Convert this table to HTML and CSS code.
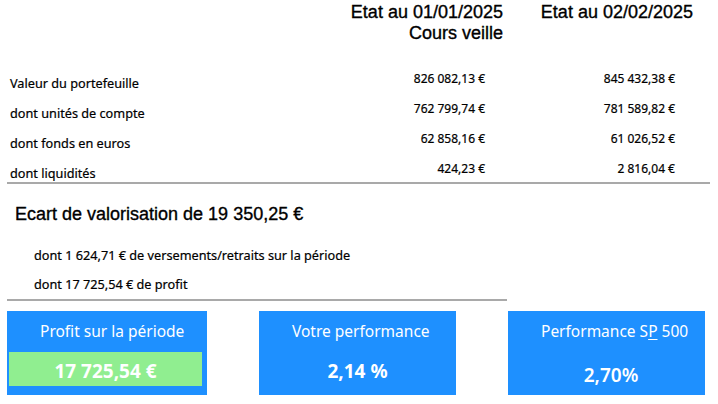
FILE: index.html
```html
<!DOCTYPE html>
<html lang="fr">
<head>
<meta charset="utf-8">
<title>Etat du portefeuille</title>
<link rel="stylesheet" href="styles.css">
</head>
<body>
<div class="page">
  <div class="head">
    <div></div>
    <div class="hcell">Etat au 01/01/2025<br>Cours veille</div>
    <div class="hcell">Etat au 02/02/2025</div>
  </div>

  <div class="rows">
    <div class="label">Valeur du portefeuille</div>
    <div class="val">826 082,13 €</div>
    <div class="val">845 432,38 €</div>
    <div></div>

    <div class="label">dont unités de compte</div>
    <div class="val">762 799,74 €</div>
    <div class="val">781 589,82 €</div>
    <div></div>

    <div class="label">dont fonds en euros</div>
    <div class="val">62 858,16 €</div>
    <div class="val">61 026,52 €</div>
    <div></div>

    <div class="label">dont liquidités</div>
    <div class="val">424,23 €</div>
    <div class="val">2 816,04 €</div>
    <div></div>
  </div>

  <div class="ecart">Ecart de valorisation de 19 350,25 €</div>

  <div class="subs">
    <div class="sub">dont 1 624,71 € de versements/retraits sur la période</div>
    <div class="sub">dont 17 725,54 € de profit</div>
  </div>

  <div class="cards">
    <div class="card">
      <div class="ctitle">Profit sur la période</div>
      <div class="cval cval-green">17 725,54 €</div>
    </div>
    <div class="card">
      <div class="ctitle">Votre performance</div>
      <div class="cval">2,14 %</div>
    </div>
    <div class="card">
      <div class="ctitle">Performance S<u>P</u> 500</div>
      <div class="cval cval-sp">2,70%</div>
    </div>
  </div>
</div>
</body>
</html>
```

FILE: styles.css
```css
html, body {
  margin: 0;
  padding: 0;
  background: #ffffff;
}

body {
  font-family: "Noto Sans", "DejaVu Sans", sans-serif;
  color: #000000;
}

.page {
  width: 718px;
  height: 404px;
  overflow: hidden;
}

.head {
  display: grid;
  grid-template-columns: 313px 190px 190px;
  padding-top: 2px;
}

.hcell {
  font-family: "Liberation Sans", Arial, sans-serif;
  font-size: 18px;
  line-height: 21px;
  text-align: right;
  -webkit-text-stroke: 0.35px #000;
}

.rows {
  margin: 18px 0 0 7px;
  width: 703px;
  display: grid;
  grid-template-columns: 306px 172px 190px 1fr;
  grid-auto-rows: 30px;
  align-items: end;
  border-bottom: 2px solid #a9a9a9;
}

.label {
  padding-left: 3px;
  font-size: 12.7px;
  line-height: 16px;
  margin-bottom: 1px;
  -webkit-text-stroke: 0.2px #000;
}

.val {
  text-align: right;
  font-size: 12px;
  line-height: 16px;
  padding-bottom: 5px;
  -webkit-text-stroke: 0.2px #000;
}

.ecart {
  margin: 20px 0 0 15px;
  font-family: "Liberation Sans", Arial, sans-serif;
  font-size: 18px;
  line-height: 21px;
  -webkit-text-stroke: 0.35px #000;
}

.subs {
  margin: 16px 0 0 7px;
  width: 500px;
  padding-left: 27px;
  box-sizing: border-box;
  border-bottom: 2px solid #a9a9a9;
}

.sub {
  font-size: 12.7px;
  line-height: 29px;
  -webkit-text-stroke: 0.2px #000;
}

.cards {
  display: grid;
  grid-template-columns: 200px 197px 197px;
  column-gap: 52px;
  margin: 10px 0 0 7px;
}

.card {
  height: 84px;
  background: #1e90ff;
  color: #ffffff;
  display: flex;
  flex-direction: column;
}

.ctitle {
  padding: 10px 0 0 33px;
  font-size: 15.5px;
  line-height: 20px;
}

.ctitle u {
  text-underline-offset: 2px;
}

.cval {
  box-sizing: border-box;
  margin-top: 11px;
  height: 34px;
  padding-top: 4px;
  line-height: 30px;
  text-align: center;
  font-size: 19px;
  font-weight: 700;
}

.cval-green {
  margin-left: 2px;
  margin-right: 5px;
  background: #90ee90;
}

.cval-sp {
  padding: 8px 0 0 9px;
  font-weight: 600;
}
```
